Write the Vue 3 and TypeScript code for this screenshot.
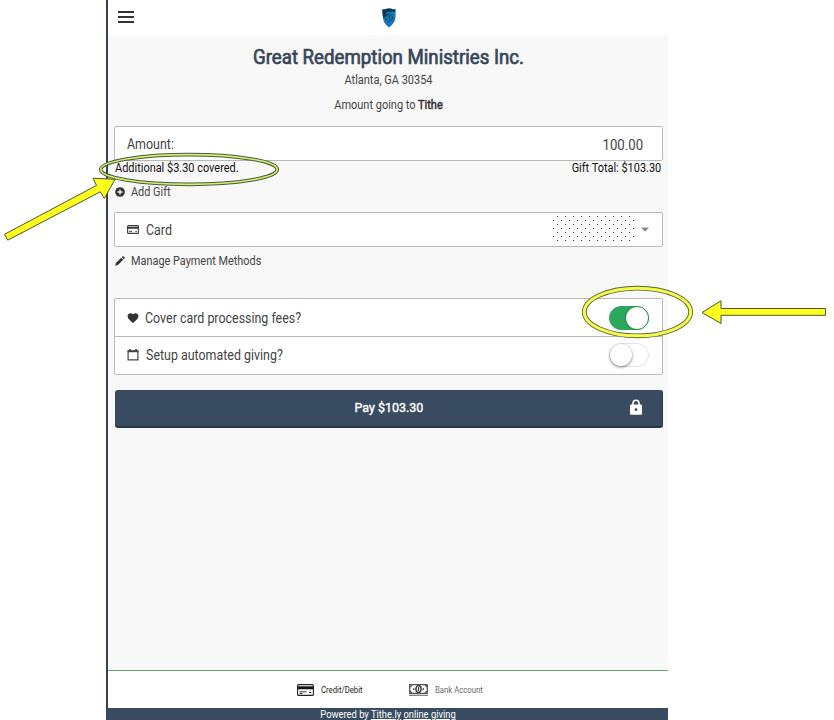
<script setup lang="ts">
import { ref, computed } from 'vue'

const amount = ref(100)
const fee = 3.3
const coverFees = ref(true)
const automated = ref(false)
const total = computed(() => (amount.value + (coverFees.value ? fee : 0)).toFixed(2))
</script>

<template>
  <div class="page">
    <main class="panel">
      <header class="topbar">
        <button class="menu" aria-label="Menu"><span></span><span></span><span></span></button>
        <svg class="shield" width="14" height="20" viewBox="0 0 14 20">
          <path d="M.4 1.2Q3 2 4.5.8Q7 .2 9.5.8Q11 2 13.6 1.2V9Q13 15.5 7 19.4Q1.2 15.5.8 9Z" fill="#1878b5" />
          <path d="M.4 1.2Q3 2 4.5.8Q7 .2 9.5.8Q11 2 13.6 1.2L13 4L10 3.2L8.5 4L5 3.4L3.8 6L5 8L2 10L.8 8Z" fill="#0c3552" />
          <path d="M4 7l3-1.2v3l3-2M7 9.5l1 3-2 2M10.5 8.5l-.8 4M3.5 11l2 1" fill="none" stroke="#123f5d" stroke-width="1" />
        </svg>
      </header>

      <section class="content">
        <h1>Great Redemption Ministries Inc.</h1>
        <p class="city">Atlanta, GA 30354</p>
        <p class="fund">Amount going to <b>Tithe</b></p>

        <div class="field amount">
          <span class="label">Amount:</span>
          <span class="value">{{ amount.toFixed(2) }}</span>
        </div>
        <div class="totals">
          <span class="covered">Additional ${{ fee.toFixed(2) }} covered.</span>
          <span class="gift-total">Gift Total: ${{ total }}</span>
        </div>
        <a class="action add">
          <svg width="10" height="10" viewBox="0 0 10 10"><circle cx="5" cy="5" r="4.8" fill="#333" /><path d="M5 2.5v5M2.5 5h5" stroke="#f8f8f8" stroke-width="1.3" /></svg>
          <span class="action-text">Add Gift</span>
        </a>

        <div class="field card">
          <svg width="12" height="9" viewBox="0 0 12 9"><rect x=".6" y=".6" width="10.8" height="7.8" rx=".7" fill="#fff" stroke="#3d3d3d" stroke-width="1.1" /><path d="M.5 2.8h11" stroke="#3d3d3d" stroke-width="2" /><path d="M2 6.3h3M8.3 6.3h1.5" stroke="#3d3d3d" /></svg>
          <span class="row-label">Card</span>
          <svg class="mask" width="84" height="27" viewBox="0 0 84 27">
            <defs>
              <pattern id="dots" width="8" height="8" patternUnits="userSpaceOnUse">
                <rect x="4" y="0" width="1" height="1" fill="#333" /><rect x="0" y="4" width="1" height="1" fill="#333" />
              </pattern>
            </defs>
            <rect width="82" height="27" fill="url(#dots)" />
          </svg>
          <svg class="caret" width="8" height="5" viewBox="0 0 8 5"><path d="M0 .5h8L4 4.7z" fill="#888" /></svg>
        </div>
        <a class="action manage">
          <svg width="10" height="10" viewBox="0 0 10 10"><path d="M.2 9.8l.7-2.7L6.2 1.8l2 2L2.9 9.1zM6.8 1.2L7.7.3Q8.2 0 8.7.4l.9.9q.4.5 0 1l-.8.9z" fill="#333" /></svg>
          <span class="action-text">Manage Payment Methods</span>
        </a>

        <div class="options">
          <div class="option">
            <svg width="12" height="10" viewBox="0 0 12 10"><path d="M6 10C4.5 8.2.6 6 .6 2.9.6.2 4.3-.9 6 1.5 7.7-.9 11.4.2 11.4 2.9 11.4 6 7.5 8.2 6 10z" fill="#333" /></svg>
            <span class="row-label fees">Cover card processing fees?</span>
            <button class="switch" :class="{ on: coverFees }" aria-label="Cover fees" @click="coverFees = !coverFees"><i></i></button>
          </div>
          <div class="option">
            <svg width="12" height="12" viewBox="0 0 12 12"><path d="M1.1 1.8h9.8v9.1H1.1z" fill="none" stroke="#444" stroke-width="1.2" /><path d="M.6 2.3h10.8M3 0v2M9 0v2" stroke="#444" stroke-width="1.7" /></svg>
            <span class="row-label">Setup automated giving?</span>
            <button class="switch" :class="{ on: automated }" aria-label="Automated giving" @click="automated = !automated"><i></i></button>
          </div>
        </div>

        <button class="pay">
          <span>Pay ${{ total }}</span>
          <svg class="lock" width="12" height="16" viewBox="0 0 12 16"><path d="M3 7V4.2a3 3 0 0 1 6 0V7" fill="none" stroke="#fff" stroke-width="1.6" /><rect y="5.6" width="12" height="10.2" rx="1.2" fill="#fff" /><circle cx="6" cy="10.6" r="1.4" fill="#394b60" /></svg>
        </button>
      </section>

      <nav class="tabs">
        <svg width="17" height="12" viewBox="0 0 17 12"><rect x=".6" y=".6" width="15.8" height="10.8" rx="1" fill="#fff" stroke="#222" stroke-width="1.1" /><path d="M.5 3.8h16" stroke="#151515" stroke-width="3" /><path d="M2.5 7.8h7M2.5 9.5h3M12 8.5h2.3" stroke="#333" /></svg>
        <span class="credit">Credit/Debit</span>
        <svg class="cash" width="19" height="12" viewBox="0 0 19 12"><path d="M.7.7h17.6v8.6H.7z" fill="#fff" stroke="#555" stroke-width="1.3" /><path d="M0 11.3h19" stroke="#777" stroke-width="1.2" /><path d="M1 3L3 1M18 3L16 1M1 7l2 2M18 7l-2 2" stroke="#555" stroke-width="1.2" /><ellipse cx="9.5" cy="5" rx="2.6" ry="3.4" fill="#fff" stroke="#444" stroke-width="1.5" /><path d="M9.5 3v4M4 5h1.5M13.5 5H15" stroke="#444" stroke-width="1.4" /></svg>
        <span class="bank">Bank Account</span>
      </nav>
      <footer class="powered"><p>Powered by <u>Tithe.ly</u> <u>online giving</u></p></footer>
    </main>

    <svg class="notes" width="834" height="720" viewBox="0 0 834 720">
      <g fill="none">
        <ellipse cx="189" cy="169.5" rx="88.3" ry="14.9" stroke="#455b43" stroke-width="3.6" />
        <ellipse cx="189" cy="169.5" rx="88.3" ry="14.9" stroke="#d9ee68" stroke-width="1.7" />
        <ellipse cx="637.5" cy="312" rx="53.2" ry="23.8" stroke="#5b6535" stroke-width="4.7" />
        <ellipse cx="637.5" cy="312" rx="53.2" ry="23.8" stroke="#f4fa4c" stroke-width="3" />
      </g>
      <g fill="#ffff1c" stroke="#4b5538" stroke-width="1">
        <path d="M4.5 234.3L96.5 185.4L93 178.2L115 179.3L104.3 198.5L100.3 191.8L7.7 240.2z" />
        <path d="M702 312.5L721 300.8V308.5H825.5V315.3H721V323.5z" />
      </g>
    </svg>
  </div>
</template>

<style>
body { margin: 0; background: #fff; }
</style>

<style scoped>
* { box-sizing: border-box; }
.page { position: relative; width: 834px; height: 720px; overflow: hidden; font-family: Roboto, sans-serif; color: #444; }
.panel { width: 562px; height: 720px; margin-left: 106px; display: flex; flex-direction: column; border-left: 2px solid #35414e; background: #f8f8f8; }
.panel span, .panel p { white-space: nowrap; }
button { border: 0; padding: 0; font-family: inherit; }
.topbar { height: 35px; flex: none; background: #fff; border-top-left-radius: 4px; display: grid; grid-template-columns: 1fr 14px 1fr; padding: 8px 0 0 1px; }
.menu { width: 16px; height: 12px; margin: 3px 0 0 9px; display: flex; flex-direction: column; justify-content: space-between; background: none; }
.menu span { height: 2px; background: #333; }
.content { flex: 1; padding: 10px 5px 0 6px; min-height: 0; }
h1 { margin: 0; height: 26px; line-height: 26px; text-align: center; font-size: 19.5px; font-weight: 400; color: #37475a; -webkit-text-stroke: .7px #37475a; white-space: nowrap; transform: scaleX(.957); }
.city, .fund { margin: 0; text-align: center; font-size: 12px; line-height: 18px; height: 18px; transform: scaleX(.915); }
.fund { margin-top: 7px; }
.fund b { font-weight: 400; color: #333; -webkit-text-stroke: .5px #333; }
.field { border: 1px solid #b9b9b9; border-radius: 2px; background: #fff; height: 35px; display: flex; align-items: center; padding: 0 19px 0 12px; }
.amount { margin-top: 12px; justify-content: space-between; font-size: 14px; }
.label, .covered, .action-text, .row-label, .credit, .bank { transform: scaleX(.888); transform-origin: left; }
.value { padding-top: 2px; transform: scaleX(.94); transform-origin: right; }
.totals { display: flex; justify-content: space-between; margin-top: 1px; height: 13px; line-height: 13px; font-size: 12px; color: #111; padding: 0 2px 0 1px; }
.covered { transform: scaleX(.912); }
.gift-total { transform: scaleX(.912); transform-origin: right; }
.action { display: flex; align-items: center; gap: 6px; margin-left: 1px; font-size: 12px; height: 16px; }
.action-text { transform: scaleX(.908); }
.add { margin-top: 9px; }
.card { margin-top: 12px; padding-right: 13px; }
.row-label { margin-left: 7px; font-size: 14px; }
.fees { margin-left: 6px; }
.mask { margin-left: auto; }
.caret { margin-left: 4px; }
.manage { margin-top: 6px; }
.options { margin-top: 29px; height: 77px; border: 1px solid #b9b9b9; border-radius: 2px; background: #fff; }
.option { height: 37px; display: flex; align-items: center; padding: 0 13px 0 12px; }
.option + .option { height: 38px; padding-bottom: 1px; border-top: 1px solid #b9b9b9; }
.switch { width: 40px; height: 24px; border-radius: 12px; margin-left: auto; background: #fff; border: 1px solid #e3e3e3; display: flex; }
.switch i { width: 22px; height: 22px; border-radius: 50%; background: #fff; box-shadow: 0 1px 3px #777; }
.switch.on { background: #2aa85c; border-color: #2aa85c; justify-content: flex-end; }
.switch.on i { box-shadow: 0 0 2px #174d2c; }
.pay { width: 548px; height: 38px; margin: 15px 0 0 1px; border-radius: 3px; background: #394b60; border-bottom: 2px solid #263747; border-right: 1px solid #263747; color: #fff; font-size: 13px; font-weight: 400; -webkit-text-stroke: .4px #fff; display: grid; grid-template-columns: 1fr auto 1fr; align-items: center; }
.pay span { grid-column: 2; margin-top: -1px; transform: scaleX(.96); }
.lock { justify-self: end; margin-right: 20px; margin-top: -2px; }
.tabs { height: 38px; flex: none; border-top: 1px solid #62a577; border-bottom-left-radius: 3px; background: #fff; display: flex; align-items: center; padding-left: 189px; font-size: 9px; color: #222; }
.credit { margin-left: 7px; width: 42px; transform: scaleX(.86); }
.cash { margin-left: 46px; }
.bank { margin-left: 7px; color: #666; transform: scaleX(.86); }
.powered { flex: none; height: 12px; margin-left: -2px; padding-left: 2px; background: #394b60; color: #fff; font-size: 10px; line-height: 14px; text-align: center; overflow: hidden; }
.powered p { margin: 0; transform: scaleX(.935); }
.notes { position: absolute; left: 0; top: 0; pointer-events: none; }
</style>
